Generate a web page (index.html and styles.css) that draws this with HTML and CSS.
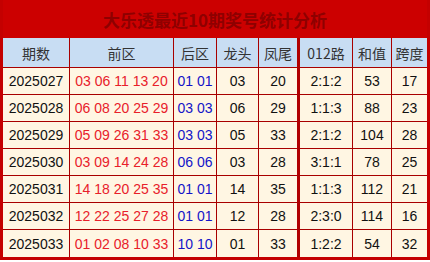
FILE: index.html
```html
<!DOCTYPE html>
<html lang="zh">
<head>
<meta charset="utf-8">
<title>大乐透最近10期奖号统计分析</title>
<link rel="stylesheet" href="styles.css">
</head>
<body>
<div class="board">
  <div class="title">大乐透最近10期奖号统计分析</div>
  <div class="grid">
    <div class="c h">期数</div><div class="c h">前区</div><div class="c h">后区</div><div class="c h">龙头</div><div class="c h n5">凤尾</div><div class="c h n6">012路</div><div class="c h">和值</div><div class="c h last">跨度</div>

    <div class="c">2025027</div><div class="c red">03 06 11 13 20</div><div class="c blue">01 01</div><div class="c">03</div><div class="c n5">20</div><div class="c n6">2:1:2</div><div class="c">53</div><div class="c last">17</div>

    <div class="c">2025028</div><div class="c red">06 08 20 25 29</div><div class="c blue">03 03</div><div class="c">06</div><div class="c n5">29</div><div class="c n6">1:1:3</div><div class="c">88</div><div class="c last">23</div>

    <div class="c">2025029</div><div class="c red">05 09 26 31 33</div><div class="c blue">03 03</div><div class="c">05</div><div class="c n5">33</div><div class="c n6">2:1:2</div><div class="c">104</div><div class="c last">28</div>

    <div class="c">2025030</div><div class="c red">03 09 14 24 28</div><div class="c blue">06 06</div><div class="c">03</div><div class="c n5">28</div><div class="c n6">3:1:1</div><div class="c">78</div><div class="c last">25</div>

    <div class="c">2025031</div><div class="c red">14 18 20 25 35</div><div class="c blue">01 01</div><div class="c">14</div><div class="c n5">35</div><div class="c n6">1:1:3</div><div class="c">112</div><div class="c last">21</div>

    <div class="c">2025032</div><div class="c red">12 22 25 27 28</div><div class="c blue">01 01</div><div class="c">12</div><div class="c n5">28</div><div class="c n6">2:3:0</div><div class="c">114</div><div class="c last">16</div>

    <div class="c b">2025033</div><div class="c b red">01 02 08 10 33</div><div class="c b blue">10 10</div><div class="c b">01</div><div class="c b n5">33</div><div class="c b n6">1:2:2</div><div class="c b">54</div><div class="c b last">32</div>
  </div>
</div>
</body>
</html>
```

FILE: styles.css
```css
html, body {
  margin: 0;
  padding: 0;
  background: #ffffff;
}

body {
  font-family: "Liberation Sans", Arial, "Noto Sans CJK SC", sans-serif;
}

.board {
  width: 424px;
  border: 3px solid #c40000;
  border-top: 0;
  background: #c40000;
}

.title {
  height: 38px;
  line-height: 39px;
  text-align: center;
  font-size: 17px;
  font-weight: bold;
  color: #8e0000;
  font-family: "Noto Sans CJK SC", "Liberation Sans", sans-serif;
  background: #cc0000;
}

.grid {
  display: grid;
  grid-template-columns: 67px 104px 43px 42px 38px 56px 39px 35px;
  grid-template-rows: 30px repeat(7, 27px);
  background: #fff6e3;
}

.c {
  display: flex;
  align-items: center;
  justify-content: center;
  font-size: 14px;
  color: #111111;
  background: #fff6e3;
  border-right: 1px solid #a80000;
  border-bottom: 1px solid #a80000;
  box-sizing: border-box;
  white-space: nowrap;
}

.h {
  background: #c8ddf3;
  color: #333333;
  font-family: "Noto Sans CJK SC", "Liberation Sans", sans-serif;
  font-size: 14px;
}

.n5 {
  border-right: 0;
}

.n6 {
  border-left: 3px solid #b00000;
}

.last {
  border-right: 0;
}

.b {
  border-bottom: 0;
}

.red {
  color: #e8202a;
}

.blue {
  color: #1414c8;
}
```
